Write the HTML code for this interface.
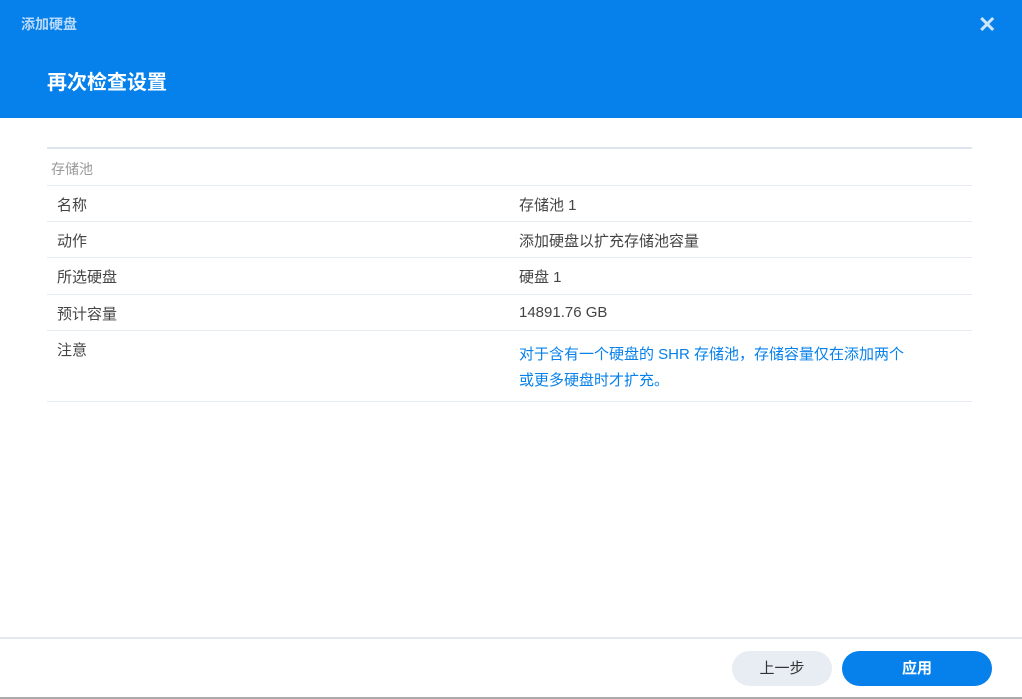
<html><head><style>
body{margin:0;width:1022px;height:699px;background:#fff;font-family:"Liberation Sans","Noto Sans CJK SC",sans-serif;position:relative;overflow:hidden}
.hd{position:absolute;left:0;top:0;width:1022px;height:118px;background:#0680eb}
.t1{position:absolute;left:21px;top:14px;font-size:14px;font-weight:bold;color:#b9dafa}
.t2{position:absolute;left:47px;top:66px;font-size:20px;font-weight:bold;color:#fff}
.x{position:absolute;left:978px;top:12px;font-size:22px;color:#cfe5fb;font-weight:bold}
.tb{position:absolute;left:47px;top:147px;width:925px;border-top:2px solid #dde5ee}
.r{position:absolute;left:0;width:925px;border-bottom:1px solid #e6ebf1;font-size:15px;color:#444}
.r .a{position:absolute;left:10px}.r .b{position:absolute;left:472px}
.ft{position:absolute;left:0;top:637px;width:1022px;border-top:2px solid #e3e9f0}
.btn{position:absolute;top:651px;height:35px;border-radius:18px;font-size:15px;text-align:center;line-height:35px}
</style></head><body>
<div class="hd"><div class="t1">添加硬盘</div><div class="t2">再次检查设置</div><div class="x">✕</div></div>
<div class="tb">
<div class="r" style="top:0;height:36px"><span class="a" style="left:4px;top:10px;font-size:14px;color:#999">存储池</span></div>
<div class="r" style="top:37px;height:35px"><span class="a" style="top:8px">名称</span><span class="b" style="top:8px">存储池 1</span></div>
<div class="r" style="top:73px;height:35px"><span class="a" style="top:8px">动作</span><span class="b" style="top:8px">添加硬盘以扩充存储池容量</span></div>
<div class="r" style="top:109px;height:36px"><span class="a" style="top:8px">所选硬盘</span><span class="b" style="top:8px">硬盘 1</span></div>
<div class="r" style="top:146px;height:35px"><span class="a" style="top:8px">预计容量</span><span class="b" style="top:9px">14891.76 GB</span></div>
<div class="r" style="top:182px;height:70px"><span class="a" style="top:8px">注意</span><span class="b" style="top:11px;color:#0680eb;line-height:26px">对于含有一个硬盘的 SHR 存储池，存储容量仅在添加两个<br>或更多硬盘时才扩充。</span></div>
</div>
<div class="ft"></div>
<div class="btn" style="left:732px;width:100px;background:#e8edf4;color:#333">上一步</div>
<div class="btn" style="left:842px;width:150px;background:#0680eb;color:#fff;font-weight:bold">应用</div>
<div style="position:absolute;left:0;top:697px;width:1022px;height:2px;background:#aaa"></div>
</body></html>
